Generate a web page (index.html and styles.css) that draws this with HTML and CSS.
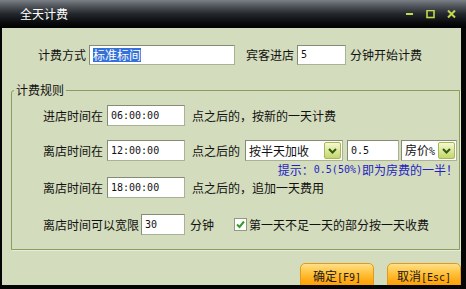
FILE: index.html
```html
<!DOCTYPE html>
<html lang="zh-CN">
<head>
  <meta charset="UTF-8">
  <meta name="viewport" content="width=device-width, initial-scale=1.0">
  <title>全天计费</title>
  <link rel="stylesheet" href="styles.css">
</head>
<body>
  <div class="window">
    <div class="titlebar">
      <span class="title">全天计费</span>
      <div class="controls">
        <svg width="9" height="9" viewBox="0 0 9 9"><rect x="1" y="3" width="7" height="2" fill="#c4d84c"/></svg>
        <svg width="9" height="9" viewBox="0 0 9 9"><rect x="1" y="0.5" width="7" height="7" fill="none" stroke="#c4d84c" stroke-width="1.6"/></svg>
        <svg width="9" height="9" viewBox="0 0 9 9"><path d="M1 0.5 L8 7.5 M8 0.5 L1 7.5" stroke="#c4d84c" stroke-width="2"/></svg>
      </div>
    </div>

    <div class="content">
      <div class="top-row">
        <span>计费方式</span>
        <div class="field mode"><span class="selected">标准标间</span></div>
        <span class="guest">宾客进店</span>
        <div class="field minutes"><span class="num">5</span></div>
        <span class="unit">分钟开始计费</span>
      </div>

      <fieldset class="rules">
        <legend>计费规则</legend>

        <div class="row first">
          <span class="label">进店时间在</span>
          <div class="field time"><span class="num">06:00:00</span></div>
          <span class="after">点之后的，按新的一天计费</span>
        </div>

        <div class="row second">
          <span class="label">离店时间在</span>
          <div class="field time"><span class="num">12:00:00</span></div>
          <span class="after">点之后的</span>
          <div class="select half">
            <span>按半天加收</span>
            <span class="arrow"><svg width="9" height="6" viewBox="0 0 9 6"><path d="M1 1 L4.5 4.5 L8 1" fill="none" stroke="#2f5c10" stroke-width="2"/></svg></span>
          </div>
          <div class="field rate"><span class="num">0.5</span></div>
          <div class="select price">
            <span>房价<span class="num">%</span></span>
            <span class="arrow"><svg width="9" height="6" viewBox="0 0 9 6"><path d="M1 1 L4.5 4.5 L8 1" fill="none" stroke="#2f5c10" stroke-width="2"/></svg></span>
          </div>
        </div>

        <div class="hint">提示：<span class="num">0.5(50%)</span>即为房费的一半！</div>

        <div class="row">
          <span class="label">离店时间在</span>
          <div class="field time"><span class="num">18:00:00</span></div>
          <span class="after">点之后的，追加一天费用</span>
        </div>

        <div class="row last">
          <span class="label">离店时间可以宽限</span>
          <div class="field grace"><span class="num">30</span></div>
          <span class="minute">分钟</span>
          <span class="checkbox"><svg width="11" height="11" viewBox="0 0 11 11"><path d="M2 5.5 L4.5 8 L9 2.5" fill="none" stroke="#3a9a2a" stroke-width="2"/></svg></span>
          <span class="check-label">第一天不足一天的部分按一天收费</span>
        </div>
      </fieldset>

      <div class="buttons">
        <button class="btn">确定<span class="num">[F9]</span></button>
        <button class="btn">取消<span class="num">[Esc]</span></button>
      </div>
    </div>
  </div>
</body>
</html>
```

FILE: styles.css
```css
body {
  margin: 0;
  padding: 0;
  font-family: "Noto Sans CJK SC", "Liberation Sans", sans-serif;
  font-size: 12px;
  line-height: 14px;
  color: #111;
  background-color: #000;
}

.window {
  width: 466px;
  height: 289px;
  background-color: #050505;
  overflow: hidden;
}

.titlebar {
  display: flex;
  align-items: center;
  height: 28px;
  padding: 0 10px 0 20px;
  box-sizing: border-box;
  background: linear-gradient(#7a7f86 0%, #50555c 22%, #23272c 50%, #0a0b0d 80%, #000 100%);
}

.title {
  color: #fff;
  font-size: 12px;
}

.controls {
  display: flex;
  align-items: center;
  gap: 12px;
  margin-left: auto;
}

.content {
  height: 257px;
  margin: 0 5px 0 2px;
  background-color: #d3dcbc;
  overflow: hidden;
}

.num {
  font-family: "DejaVu Sans Mono", "Liberation Mono", monospace;
  font-size: 10px;
}

.field {
  display: flex;
  align-items: center;
  box-sizing: border-box;
  height: 21px;
  padding-left: 3px;
  background-color: #fff;
  border: 1px solid #a9b197;
  border-top-color: #858c74;
  border-left-color: #858c74;
}

/* top line */
.top-row {
  display: flex;
  align-items: center;
  padding: 17px 0 0 36px;
}

.top-row .field {
  height: 20px;
}

.mode {
  width: 146px;
  margin-left: 3px;
}

.selected {
  background-color: #3470d8;
  color: #fff;
  line-height: 14px;
}

.guest {
  margin-left: 11px;
}

.minutes {
  width: 49px;
  margin-left: 3px;
}

.unit {
  margin-left: 4px;
}

/* rules group */
.rules {
  margin: 18px 1px 0 9px;
  padding: 0 1px 14px 31px;
  border: 1px solid #8c9c5c;
  border-radius: 3px 0 0 0;
  box-shadow: 1px 1px 0 #e6ecd6;
}

.rules legend {
  margin-left: -29px;
  padding: 0 2px;
  line-height: 14px;
}

.row {
  display: flex;
  align-items: center;
  height: 21px;
}

.row.first {
  margin-top: 8px;
}

.row.second {
  margin-top: 14px;
}

.row.last {
  margin-top: 16px;
}

.label {
  width: 60px;
}

.time {
  width: 78px;
  margin-left: 4px;
}

.after {
  margin-left: 7px;
}

.select {
  display: flex;
  align-items: center;
  justify-content: space-between;
  box-sizing: border-box;
  height: 21px;
  padding: 0 1px 0 3px;
  background-color: #fff;
  border: 1px solid #a9b197;
  border-top-color: #858c74;
  border-left-color: #858c74;
}

.half {
  width: 98px;
  margin-left: 5px;
}

.rate {
  width: 52px;
  margin-left: 4px;
}

.price {
  width: 56px;
  margin-left: 2px;
}

.arrow {
  display: flex;
  align-items: center;
  justify-content: center;
  width: 15px;
  height: 15px;
  border: 1px solid #a6b854;
  border-radius: 2px;
  background: linear-gradient(#f6f9cf, #c4d66c);
}

.hint {
  display: flex;
  justify-content: flex-end;
  align-items: center;
  height: 15px;
  margin-top: 1px;
  color: #1f1fc4;
}

.row.last .label {
  width: 96px;
}

.grace {
  width: 44px;
  margin-left: 2px;
}

.minute {
  margin-left: 5px;
}

.checkbox {
  display: flex;
  align-items: center;
  justify-content: center;
  box-sizing: border-box;
  width: 13px;
  height: 13px;
  margin-left: 20px;
  background-color: #fff;
  border: 1px solid #8f9c7a;
}

.check-label {
  margin-left: 2px;
}

/* bottom buttons */
.buttons {
  display: flex;
  justify-content: flex-end;
  gap: 13px;
  margin-top: 13px;
}

.btn {
  width: 74px;
  height: 26px;
  padding: 0 0 2px 0;
  font-family: "Noto Sans CJK SC", sans-serif;
  font-size: 12px;
  color: #1a1a1a;
  background: linear-gradient(#ffe08a 0%, #ffc94a 30%, #ffa914 70%, #ff9a00 100%);
  border: 1px solid #e29a1c;
  border-radius: 5px 5px 0 0;
}
```
